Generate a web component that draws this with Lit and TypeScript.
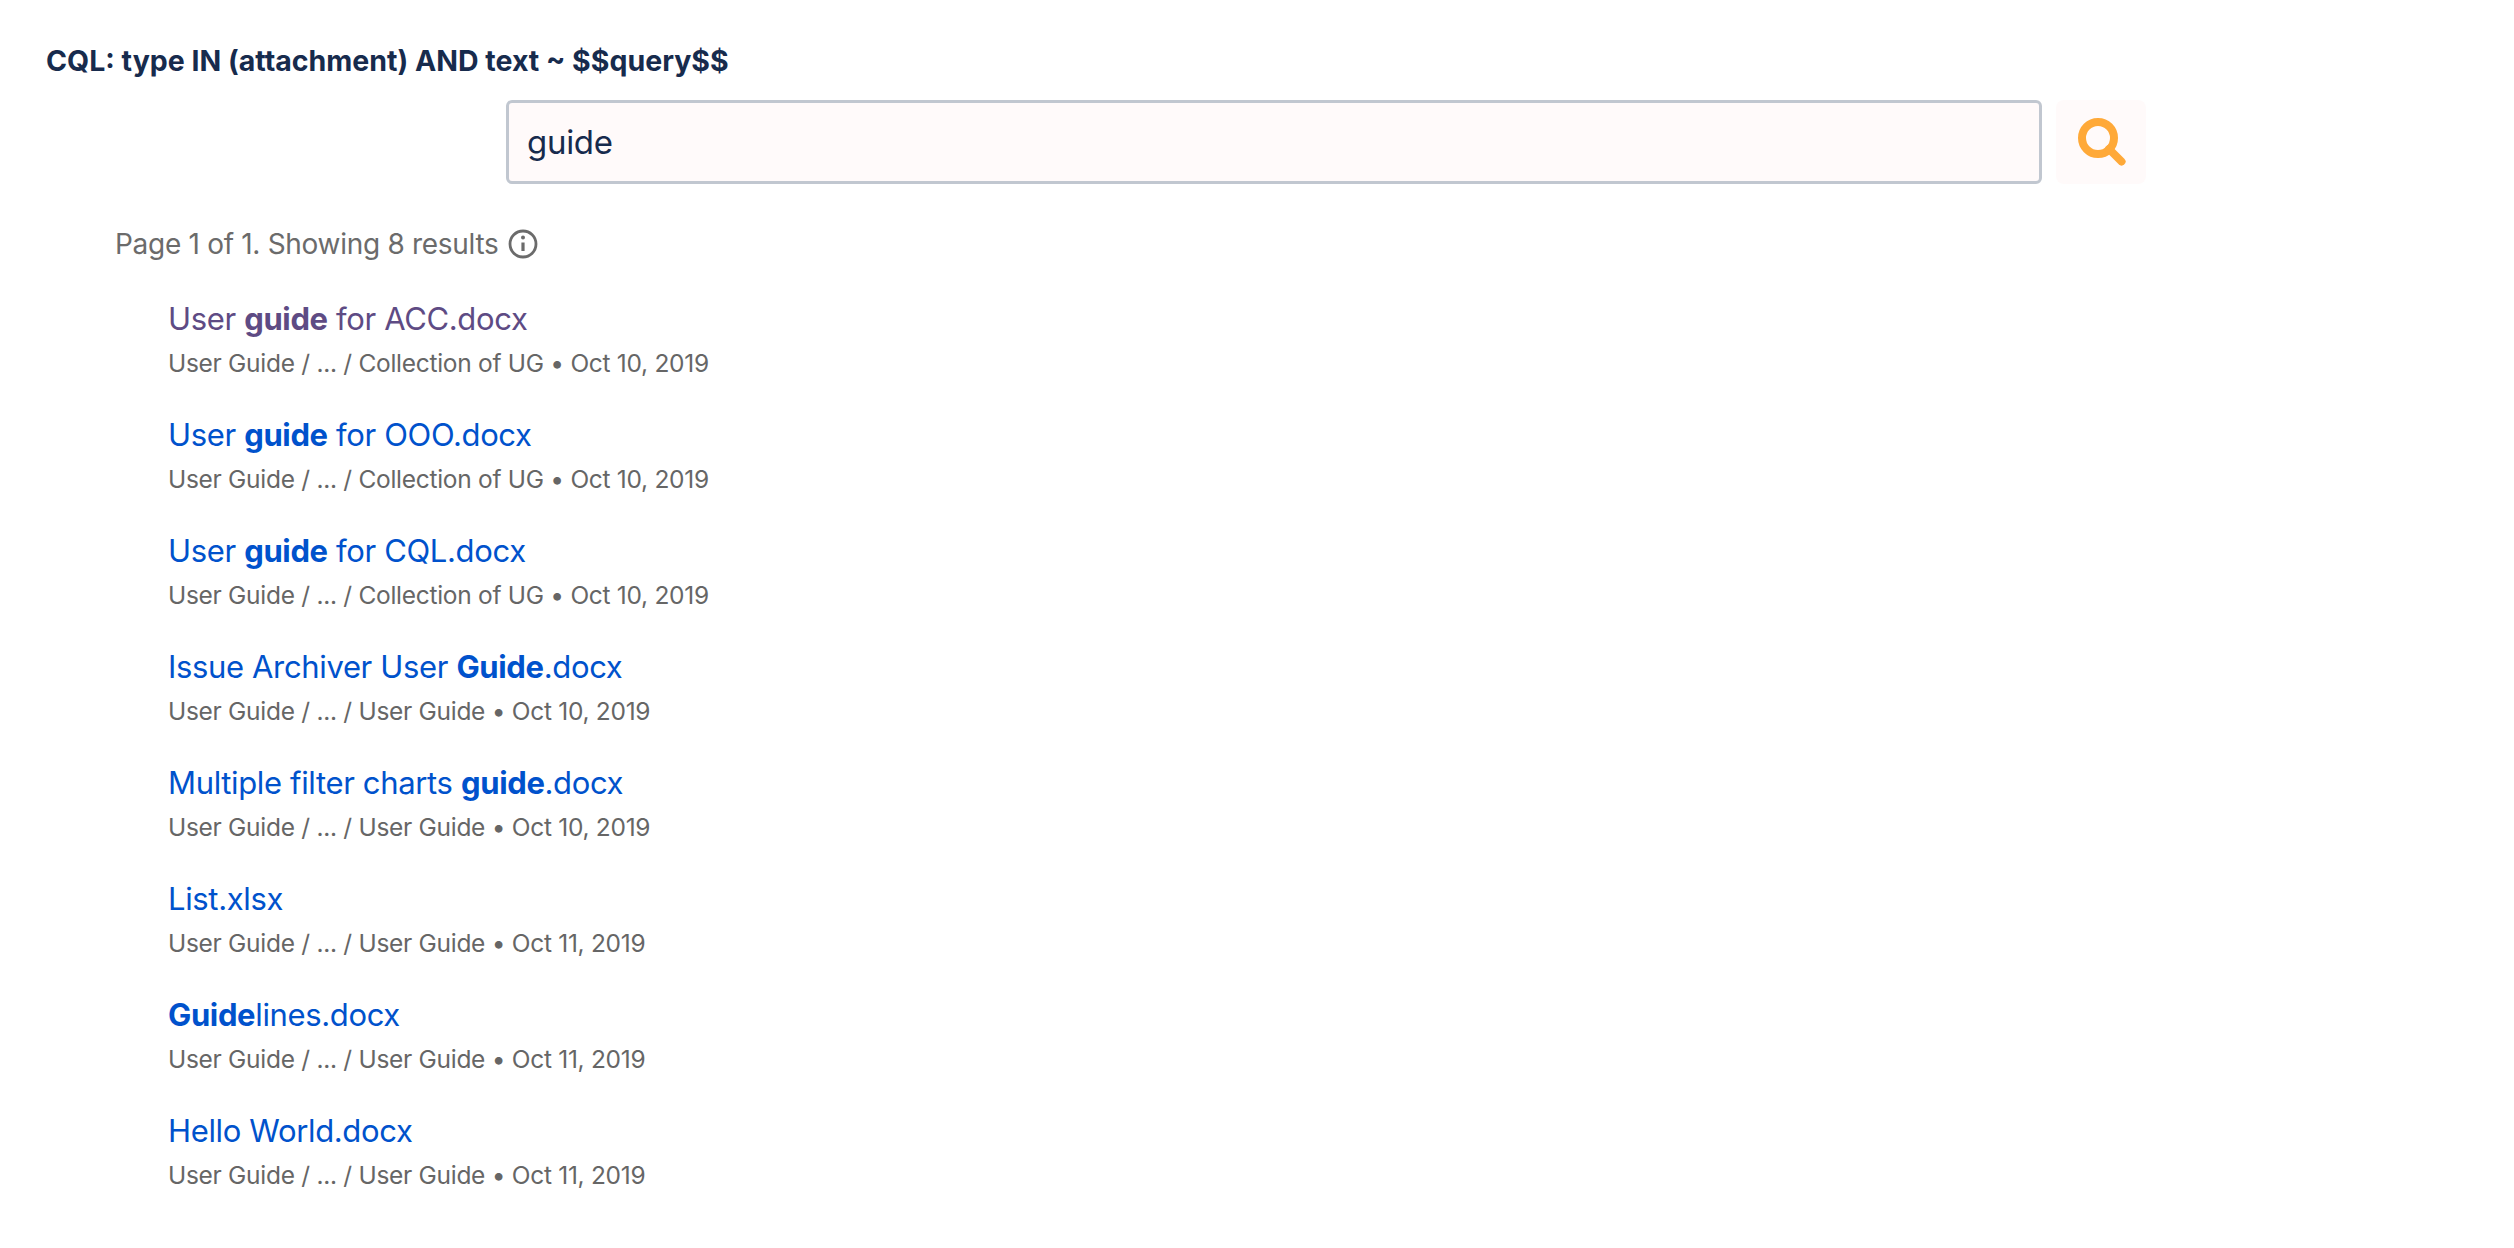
import { LitElement, html, css } from "lit";
import { customElement } from "lit/decorators.js";

const rows: [any, string, boolean][] = [
  [html`User <b>guide</b> for ACC.docx`, "Collection of UG • Oct 10, 2019", true],
  [html`User <b>guide</b> for OOO.docx`, "Collection of UG • Oct 10, 2019", false],
  [html`User <b>guide</b> for CQL.docx`, "Collection of UG • Oct 10, 2019", false],
  [html`Issue Archiver User <b>Guide</b>.docx`, "User Guide • Oct 10, 2019", false],
  [html`Multiple filter charts <b>guide</b>.docx`, "User Guide • Oct 10, 2019", false],
  [html`List.xlsx`, "User Guide • Oct 11, 2019", false],
  [html`<b>Guide</b>lines.docx`, "User Guide • Oct 11, 2019", false],
  [html`Hello World.docx`, "User Guide • Oct 11, 2019", false],
];

@customElement("app-root")
export class AppRoot extends LitElement {
  static styles = css`
    :host { display: block; height: 1248px; background: #fff; font-family: Inter, "Liberation Sans", sans-serif; overflow: hidden; }
    .title { margin: 0; padding: 43px 0 0 46px; font-size: 28.5px; line-height: 36px; font-weight: 700; color: #172b4d; }
    .search { display: flex; gap: 14px; margin: 21px 0 0 506px; }
    .input { box-sizing: border-box; width: 1536px; height: 84px; border: 3px solid #c1c7d0; border-radius: 6px; background: #fffafa; padding: 0 18px; display: flex; align-items: center; font-size: 33px; letter-spacing: -0.3px; color: #172b4d; }
    .btn { width: 90px; height: 84px; border-radius: 8px; background: #fffafa; display: flex; align-items: center; justify-content: center; }
    .summary { display: flex; align-items: center; gap: 10px; margin: 42px 0 0 115px; height: 36px; font-size: 28px; letter-spacing: -0.3px; color: #6b6b6b; }
    .list { list-style: none; margin: 35px 0 0 168px; padding: 0; display: flex; flex-direction: column; gap: 32px; }
    .link { font-size: 31px; letter-spacing: -0.35px; line-height: 44px; color: #0052cc; }
    .link.visited { color: #5e4b84; }
    .meta { font-size: 24.5px; letter-spacing: -0.29px; line-height: 36px; margin-top: 4px; color: #666; }
    b { font-weight: 700; }
  `;
  render() {
    return html`
      <h1 class="title">CQL: type IN (attachment) AND text ~ $$query$$</h1>
      <div class="search">
        <div class="input">guide</div>
        <div class="btn">
          <svg width="50" height="50" viewBox="0 0 50 50" fill="none" stroke="#ffa938" stroke-linecap="round">
            <circle cx="22" cy="21" r="16" stroke-width="8"></circle>
            <line x1="33" y1="32" x2="45.5" y2="44.5" stroke-width="8"></line>
          </svg>
        </div>
      </div>
      <div class="summary">
        <span>Page 1 of 1. Showing 8 results</span>
        <svg width="30" height="30" viewBox="0 0 30 30" fill="none" stroke="#6b6b6b">
          <circle cx="15" cy="15" r="13" stroke-width="2.8"></circle>
          <line x1="15" y1="13.5" x2="15" y2="22" stroke-width="3.2"></line>
          <circle cx="15" cy="8.5" r="2" fill="#6b6b6b" stroke="none"></circle>
        </svg>
      </div>
      <ul class="list">
        ${rows.map(([t, m, v]) => html`<li>
          <div class="link ${v ? "visited" : ""}">${t}</div>
          <div class="meta">User Guide / ... / ${m}</div>
        </li>`)}
      </ul>
    `;
  }
}
